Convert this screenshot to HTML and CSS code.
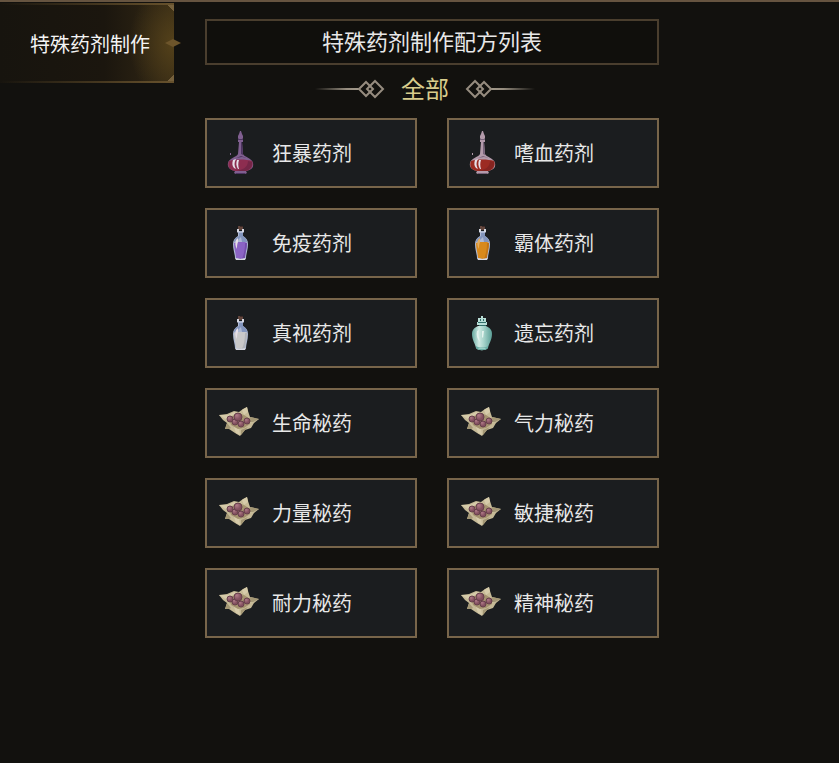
FILE: index.html
```html
<!DOCTYPE html>
<html lang="zh-CN">
<head>
  <meta charset="UTF-8">
  <meta name="viewport" content="width=device-width, initial-scale=1.0">
  <title>特殊药剂制作</title>
  <link rel="stylesheet" href="styles.css">
</head>
<body>

  <!-- Shared icon shapes -->
  <svg class="defs" width="0" height="0" aria-hidden="true">
    <defs>
      <linearGradient id="fade"><stop offset="0" stop-color="#8f877a" stop-opacity="0"/><stop offset=".7" stop-color="#968d7f"/><stop offset="1" stop-color="#a39a8c"/></linearGradient>
      <radialGradient id="berry" cx=".35" cy=".3"><stop offset="0" stop-color="#b07a88"/><stop offset="1" stop-color="#83505f"/></radialGradient>
      <linearGradient id="jade"><stop offset="0" stop-color="#68aaa1"/><stop offset=".35" stop-color="#cfe9e2"/><stop offset=".6" stop-color="#a5d2c9"/><stop offset="1" stop-color="#5a9e96"/></linearGradient>
    </defs>

    <symbol id="flask" viewBox="0 0 44 44">
      <path class="glass" d="M22 0h1l1 3 1 2v2l-1 2h1v2h-1l1 12c1 3 9 4 10 9 1 5-2 7-7 8l1 2-2 1h-9l-2-1 1-2c-5-1-8-4-7-8 1-5 9-6 10-9l1-12h-1V9h1l-1-2V5l1-2z"/>
      <path class="shade" d="M23 11h1l1 13-2-1zM20 8h5v1h-5zM18 27l5-2 6 2-5-1zM18 42h9v1h-9z"/>
      <path class="liquid" d="M11 30c6-2 17-2 23 0 2 5-1 9-6 10H17c-6-1-8-5-6-10z"/>
      <path class="dark" d="M30 30l4 1c1 4-2 8-7 9h-9c7-1 12-4 12-10z"/>
      <path class="shine" d="M15 29l3-1c-2 3-2 7 0 10l-2-1c-2-2-2-5-1-8zM19 29h2c-1 3-1 6 0 9h-1c-2-3-2-6-1-9z"/>
      <path class="glass" d="M12 22h1v2h-1z"/>
    </symbol>

    <symbol id="bottle" viewBox="0 0 44 44">
      <path fill="#62463d" d="M20 5h5v4h-5z"/>
      <path fill="#3d2a27" d="M22 5h3v1h-3z"/>
      <path fill="#aeb9d3" d="M19 8h2v2h3V8h2v3l-1 1v3c3 2 5 4 5 8 0 6-2 10-2 14l-2 2h-7l-2-2c0-4-2-8-2-14 0-4 2-6 5-8v-3l-1-1z"/>
      <path fill="#8395bd" d="M21 12h4v3c3 2 4 4 4 6h-5l-1-5-4 4-3 1c0-2 1-4 5-6z"/>
      <path class="liquid" d="M16 22l4-1h7l2 1c0 6-2 10-2 15l-4 1-5-1c0-5-2-9-2-15z"/>
      <path class="dark" d="M27 22h2c0 6-2 10-2 15l-3 1c2-5 3-10 3-16z"/>
      <path class="shine" d="M18 19l2-2v4c-1 2-1 5-1 7-2-3-2-6-1-9z"/>
      <path fill="#d8d9e2" d="M17 37l5 1 6-1-1 2h-9zM19 8h2v3h-2zM24 8h2v3h-2z"/>
    </symbol>

    <symbol id="jar" viewBox="0 0 44 44">
      <path fill="#b9ded7" d="M18 7h3V5h2v2h3v4h1v3H17v-3h1z"/>
      <path fill="#346f6b" d="M20 8h1v2h-1zM23 8h1v2h-1zM18 11h8v1h-8zM19 14h7v1h-7z"/>
      <path fill="url(#jade)" d="M18 15h8c4 2 6 4 6 8 0 6-3 9-4 14-2 3-10 3-12 0-1-5-4-8-4-14 0-4 2-6 6-8z"/>
      <path fill="#e4f3ee" d="M17 20l2-1c-1 4 0 8 1 12-3-3-4-7-3-11zM22 20h2l-1 7-1-1z"/>
      <path fill="#6aaea5" d="M16 35c3 2 9 2 12 0v2c-3 3-10 3-12 0z"/>
      <path fill="#9bd0c6" d="M18 37h8l-1 1h-6z"/>
    </symbol>

    <symbol id="pouch" viewBox="0 0 44 44">
      <path fill="#c6ba97" d="M1 14l8-1 7-3 5 1 4-3 4-2 1 4 2 6 9 2-5 4-3 5-6 2-5 6-5-3-6-4-4 0 2-6-4-3z"/>
      <path fill="#d6cbaa" d="M1 14l9 0 6-3 4 1-7 3-2 5zM24 9l5-3 1 5-4 3zM16 26l5 1 1 7-4-2z"/>
      <path fill="#a49775" d="M32 16l9 2-6 3-4 0zM7 28l2-6 4 5-2 1zM23 29l7-3-3 3-4 5z"/>
      <path fill="#a4926f" d="M11 17l9-5 6 2 6 4 0 5-6 4-6 1-7-4z"/>
      <g fill="url(#berry)" stroke="#67404c">
        <circle cx="17" cy="21" r="3"/>
        <circle cx="12" cy="18" r="3"/>
        <circle cx="20" cy="16" r="4"/>
        <circle cx="29" cy="20" r="3"/>
        <circle cx="23" cy="23" r="3"/>
      </g>
    </symbol>

    <symbol id="ornament" viewBox="0 0 70 20">
      <path fill="url(#fade)" d="M0 9h45v2H0z"/>
      <g fill="none" stroke="#968c7f" stroke-width="2">
        <path d="M60 2l8 8-8 8-8-8z"/>
        <path d="M51 3l7 7-7 7-7-7z"/>
      </g>
    </symbol>
  </svg>

  <div class="layout">
    <nav class="sidebar">
      <button class="tab" type="button">特殊药剂制作
        <svg class="tab-mark" viewBox="0 0 16 14" aria-hidden="true"><path d="M0 7l8-4 8 4-8 4z"/></svg>
      </button>
    </nav>

    <main>
      <h1 class="title">特殊药剂制作配方列表</h1>

      <div class="category">
        <svg class="ornament" aria-hidden="true"><use href="#ornament"/></svg>
        <h2>全部</h2>
        <svg class="ornament flip" aria-hidden="true"><use href="#ornament"/></svg>
      </div>

      <div class="recipes">
        <button class="recipe" type="button"><svg class="icon plum" aria-hidden="true"><use href="#flask"/></svg>狂暴药剂</button>
        <button class="recipe" type="button"><svg class="icon blood" aria-hidden="true"><use href="#flask"/></svg>嗜血药剂</button>
        <button class="recipe" type="button"><svg class="icon violet" aria-hidden="true"><use href="#bottle"/></svg>免疫药剂</button>
        <button class="recipe" type="button"><svg class="icon amber" aria-hidden="true"><use href="#bottle"/></svg>霸体药剂</button>
        <button class="recipe" type="button"><svg class="icon milk" aria-hidden="true"><use href="#bottle"/></svg>真视药剂</button>
        <button class="recipe" type="button"><svg class="icon" aria-hidden="true"><use href="#jar"/></svg>遗忘药剂</button>
        <button class="recipe" type="button"><svg class="icon" aria-hidden="true"><use href="#pouch"/></svg>生命秘药</button>
        <button class="recipe" type="button"><svg class="icon" aria-hidden="true"><use href="#pouch"/></svg>气力秘药</button>
        <button class="recipe" type="button"><svg class="icon" aria-hidden="true"><use href="#pouch"/></svg>力量秘药</button>
        <button class="recipe" type="button"><svg class="icon" aria-hidden="true"><use href="#pouch"/></svg>敏捷秘药</button>
        <button class="recipe" type="button"><svg class="icon" aria-hidden="true"><use href="#pouch"/></svg>耐力秘药</button>
        <button class="recipe" type="button"><svg class="icon" aria-hidden="true"><use href="#pouch"/></svg>精神秘药</button>
      </div>
    </main>
  </div>

</body>
</html>
```
FILE: styles.css
```css
* { box-sizing: border-box; }
body { margin: 0; background: #12110e; color: #e8e8e8; font-family: "Noto Sans CJK SC", sans-serif; }
button { font: inherit; color: inherit; cursor: pointer; }
.defs { position: absolute; }

.layout { display: grid; grid-template-columns: 174px 1fr 149px; column-gap: 31px; min-height: 100vh; border-top: 2px solid #665440; }

/* Selected tab, glowing towards its right edge */
.tab {
  position: relative;
  width: 100%;
  height: 80px;
  margin-top: 1px;
  padding: 0 0 0 30px;
  border: 0;
  text-align: left;
  font-size: 20px;
  color: #f4f4f4;
  background:
    linear-gradient(to right, transparent, #65502c) top / 100% 2px no-repeat,
    linear-gradient(to right, transparent, #65502c) bottom / 100% 2px no-repeat,
    linear-gradient(45deg, transparent 50%, #76613c 50%) top right / 8px 8px no-repeat,
    linear-gradient(135deg, transparent 50%, #76613c 50%) bottom right / 8px 8px no-repeat,
    radial-gradient(ellipse 45px 60px at 100% 50%, #54411a, transparent),
    linear-gradient(to right, #17140e, #1b160e 60%, #342915);
}
.tab-mark { position: absolute; right: -7px; top: 33px; width: 16px; height: 14px; fill: #6d552b; }

.title {
  display: flex;
  align-items: center;
  justify-content: center;
  height: 46px;
  margin: 17px 0 0;
  padding-bottom: 4px;
  border: 2px solid #4a3e2e;
  background: #100f0c;
  font-size: 22px;
  font-weight: 400;
}

.category { display: flex; align-items: center; justify-content: center; gap: 16px; height: 48px; margin-bottom: 5px; padding-right: 14px; }
.category h2 { margin: 0; padding-bottom: 3px; font-size: 24px; font-weight: 400; color: #d8cc8c; }
.ornament { width: 70px; height: 20px; }
.flip { transform: scaleX(-1); }

.recipes { display: grid; grid-template-columns: 1fr 1fr; gap: 20px 30px; }
.recipe {
  display: flex;
  align-items: center;
  gap: 10px;
  height: 70px;
  padding: 0 11px 1px;
  border: 2px solid #78654a;
  background: #1b1d1f;
  font-size: 20px;
}
.icon { flex: none; width: 44px; height: 44px; }

/* Potion colours */
.glass { fill: var(--glass); }
.shade { fill: var(--shade); }
.liquid { fill: var(--liquid); }
.dark { fill: var(--dark); }
.shine { fill: var(--shine, #e6dfe8); }
.plum { --glass: #805f90; --shade: #4e3562; --liquid: #8d2d50; --dark: #742647; }
.blood { --glass: #b39aaa; --shade: #78637a; --liquid: #9c2b22; --dark: #862420; }
.violet { --liquid: #8b64c4; --dark: #754fac; }
.amber { --liquid: #d8891c; --dark: #c27416; --shine: #e2ad62; }
.milk { --liquid: #c9c8c9; --dark: #b1b3b9; }
```
